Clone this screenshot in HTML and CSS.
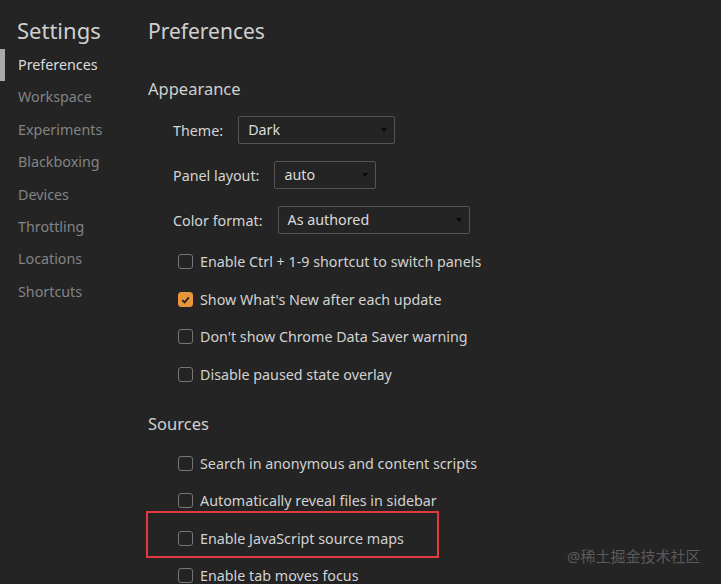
FILE: index.html
```html
<!DOCTYPE html>
<html lang="en">
<head>
    <meta charset="UTF-8">
    <title>Settings</title>
    <link rel="stylesheet" href="styles.css">
</head>
<body>
    <div class="settings">
        <nav class="sidebar">
            <h1>Settings</h1>
            <ul>
                <li class="active">Preferences</li>
                <li>Workspace</li>
                <li>Experiments</li>
                <li>Blackboxing</li>
                <li>Devices</li>
                <li>Throttling</li>
                <li>Locations</li>
                <li>Shortcuts</li>
            </ul>
        </nav>
        <main class="panel">
            <h2>Preferences</h2>

            <section class="group">
                <h3>Appearance</h3>
                <div class="field">
                    <label>Theme:</label>
                    <div class="select theme">Dark<span class="arrow"></span></div>
                </div>
                <div class="field">
                    <label>Panel layout:</label>
                    <div class="select layout">auto<span class="arrow"></span></div>
                </div>
                <div class="field">
                    <label>Color format:</label>
                    <div class="select format">As authored<span class="arrow"></span></div>
                </div>
                <div class="check"><span class="box"></span>Enable Ctrl + 1-9 shortcut to switch panels</div>
                <div class="check"><span class="box on"><svg viewBox="0 0 14 14" width="14" height="14"><path d="M3.5 7.2 L6 9.6 L10.6 4.2" fill="none" stroke="#1f1f1f" stroke-width="1.8"/></svg></span>Show What's New after each update</div>
                <div class="check"><span class="box"></span>Don't show Chrome Data Saver warning</div>
                <div class="check"><span class="box"></span>Disable paused state overlay</div>
            </section>

            <section class="group">
                <h3>Sources</h3>
                <div class="check"><span class="box"></span>Search in anonymous and content scripts</div>
                <div class="check"><span class="box"></span>Automatically reveal files in sidebar</div>
                <div class="check marked"><span class="box"></span>Enable JavaScript source maps</div>
                <div class="check"><span class="box"></span>Enable tab moves focus</div>
            </section>
        </main>
    </div>
    <div class="watermark">@稀土掘金技术社区</div>
</body>
</html>
```

FILE: styles.css
```css
body {
    margin: 0;
    background-color: #242424;
    color: #d4d4d4;
    font-family: "Noto Sans", sans-serif;
    font-size: 14.3px;
    height: 584px;
    overflow: hidden;
    position: relative;
}

.settings {
    display: flex;
}

.sidebar {
    width: 148px;
    flex-shrink: 0;
}

.sidebar h1 {
    font-size: 22px;
    font-weight: normal;
    color: #d0d0d0;
    margin: 15px 0 0 17px;
    line-height: 30px;
}

.sidebar ul {
    list-style: none;
    margin: 4px 0 0 0;
    padding: 0;
}

.sidebar li {
    height: 32.4px;
    line-height: 32px;
    color: #838383;
    border-left: 5px solid transparent;
    padding-left: 13px;
}

.sidebar li.active {
    color: #dcdcdc;
    border-left-color: #a9a9a9;
}

.panel {
    flex: 1;
}

.panel h2 {
    font-size: 21px;
    font-weight: normal;
    color: #d0d0d0;
    margin: 16px 0 0 0;
    line-height: 30px;
    padding-bottom: 29px;
}

.group h3 {
    font-size: 16.5px;
    font-weight: normal;
    color: #d0d0d0;
    margin: 0;
    line-height: 28px;
    padding-bottom: 13px;
}

.field {
    display: flex;
    align-items: center;
    gap: 15px;
    margin-left: 25px;
    height: 28px;
    margin-bottom: 17px;
}

.select {
    box-sizing: border-box;
    height: 28px;
    border: 1px solid #555;
    border-radius: 2px;
    padding-left: 9px;
    line-height: 26px;
    position: relative;
    color: #dcdcdc;
}

.select .arrow {
    position: absolute;
    right: 7px;
    top: 11px;
    border-left: 3.5px solid transparent;
    border-right: 3.5px solid transparent;
    border-top: 4px solid #0a0a0a;
}

.theme { width: 157px; }
.layout { width: 102px; }
.format { width: 192px; }

.check {
    display: flex;
    align-items: center;
    height: 37.6px;
    margin-left: 30px;
    color: #d2d2d2;
}

.group .field + .check {
    margin-top: -8px;
}

.box {
    box-sizing: border-box;
    width: 15px;
    height: 15px;
    border: 1px solid #777;
    border-radius: 3px;
    margin-right: 7px;
    display: flex;
}

.box.on {
    background-color: #e8963c;
    border-color: #e8963c;
}

.group + .group {
    margin-top: 17px;
}

.group + .group h3 {
    padding-bottom: 6px;
}

.marked {
    position: relative;
}

.marked::before {
    content: "";
    position: absolute;
    left: -32px;
    top: -9px;
    width: 293px;
    height: 47px;
    box-sizing: border-box;
    border: 2px solid #e2393f;
}

.watermark {
    position: absolute;
    left: 567px;
    top: 545px;
    font-family: "Noto Sans", "Noto Sans CJK SC", sans-serif;
    font-size: 15px;
    color: #5a5a5a;
}
```
